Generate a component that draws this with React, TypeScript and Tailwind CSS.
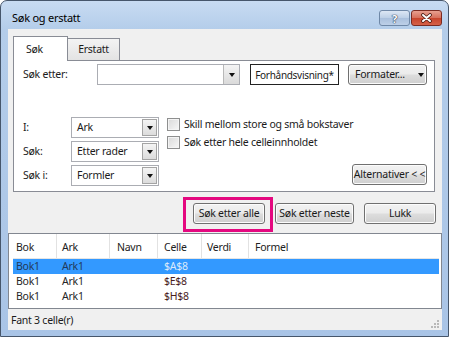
import type { ReactNode } from 'react'

const btn =
  'flex h-[21px] items-center justify-center whitespace-nowrap rounded-[3px] border border-[#707070] bg-[linear-gradient(#f2f2f2_0%,#ebebeb_48%,#dddddd_52%,#cfcfcf_100%)] text-[#1a1a1a] shadow-[inset_0_0_0_1px_#fcfcfc]'

function Arrow() {
  return <span className="h-0 w-0 border-x-[3.5px] border-t-[4px] border-x-transparent border-t-[#111]" />
}

function Combo({ value, w }: { value: string; w: string }) {
  return (
    <div className={`flex h-[21px] ${w} items-stretch border border-[#abadb3] bg-white`}>
      <span className="flex flex-1 items-center pl-[5px]">{value}</span>
      <span className="m-px flex w-[15px] items-center justify-center border border-[#a4a4a4] bg-[linear-gradient(#f4f4f4,#dcdcdc)]">
        <Arrow />
      </span>
    </div>
  )
}

function Check({ children }: { children: ReactNode }) {
  return (
    <div className="flex items-center gap-[4px]">
      <span className="h-[13px] w-[13px] border border-[#8e8f8f] bg-[linear-gradient(135deg,#d9d9d9,#f7f7f7)] shadow-[inset_0_0_0_1px_#f4f4f4]" />
      <span>{children}</span>
    </div>
  )
}

const cols = [
  { w: 'w-[44px]', pl: 'pl-[3px]', label: 'Bok' },
  { w: 'w-[53px]', pl: 'pl-[5px]', label: 'Ark' },
  { w: 'w-[48px]', pl: 'pl-[7px]', label: 'Navn' },
  { w: 'w-[44px]', pl: 'pl-[6px]', label: 'Celle' },
  { w: 'w-[47px]', pl: 'pl-[5px]', label: 'Verdi' },
]

const results = [
  { bok: 'Bok1', ark: 'Ark1', celle: '$A$8' },
  { bok: 'Bok1', ark: 'Ark1', celle: '$E$8' },
  { bok: 'Bok1', ark: 'Ark1', celle: '$H$8' },
]

export default function App() {
  return (
    <div className="h-[337px] w-[450px] bg-white font-['Noto_Sans',sans-serif] text-[10.5px] leading-none tracking-[-0.25px] text-[#1b1b1b]">
      <div className="flex h-full w-[449px] flex-col rounded-t-[7px] border border-[#46566b] bg-[linear-gradient(#c8dbf2,#b4cdea_28px,#a9c4e6_100%)]">
        {/* title bar */}
        <div className="flex h-[28px] shrink-0 items-start justify-between pl-[11px] pr-[6px]">
          <span className="mt-[11px] text-[11px] text-black">Søk og erstatt</span>
          <div className="mt-[9px] flex gap-[1px]">
            <div className="flex h-[16px] w-[31px] items-center justify-center rounded-[3px] border border-[#6f88a7] bg-[linear-gradient(#dce7f4,#bccfe6_50%,#a9bfdc_50%,#bdd0e8)]">
              <span className="text-[11px] font-bold text-white [text-shadow:0_0_1px_#2b3d57,0_0_1px_#2b3d57,0_0_1px_#2b3d57]">?</span>
            </div>
            <div className="flex h-[16px] w-[31px] items-center justify-center rounded-[3px] border border-[#7b2b22] bg-[linear-gradient(#e8a090,#d66e5a_50%,#c7432b_50%,#d56148)]">
              <svg width="13" height="10" viewBox="0 0 13 10">
                <path d="M3 2 L10 8 M10 2 L3 8" stroke="#4a1a12" strokeWidth="3.6" strokeLinecap="round" />
                <path d="M3 2 L10 8 M10 2 L3 8" stroke="#fff" strokeWidth="2" strokeLinecap="round" />
              </svg>
            </div>
          </div>
        </div>

        {/* client area */}
        <div className="mb-[6px] ml-[7px] mr-[6px] flex flex-1 flex-col bg-[#f0f0f0]">
          {/* tabs */}
          <div className="pl-[5px] pr-[7px] pt-[7px]">
            <div className="flex h-[24px] items-end">
              <div className="relative z-10 -mb-px flex h-[25px] w-[55px] items-center border border-b-0 border-[#898c95] bg-white pl-[12px] pt-[1px]">
                Søk
              </div>
              <div className="flex h-[22px] w-[52px] items-center justify-center border border-b-0 border-l-0 border-[#898c95] bg-[linear-gradient(#f3f3f3,#e3e3e3)]">
                Erstatt
              </div>
            </div>
            <div className="h-[132px] border border-[#898c95] bg-white pl-[9px] pr-[7px]">
              <div className="mt-[2px] flex h-[23px] items-center">
                <span className="w-[74px]">Søk etter:</span>
                <div className="flex h-[21px] w-[143px] items-stretch border border-[#abadb3] bg-white">
                  <span className="flex-1" />
                  <span className="flex w-[16px] items-center justify-center border-l border-[#b8b8b8] bg-[linear-gradient(#f4f4f4,#dadada)]">
                    <Arrow />
                  </span>
                </div>
                <div className="ml-[10px] flex h-[21px] w-[89px] items-center justify-center whitespace-nowrap border border-[#222] bg-white text-[10px] tracking-[-0.3px]">
                  Forhåndsvisning*
                </div>
                <div className={`${btn} ml-[9px] w-[79px] gap-[13px] pl-[4px]`}>
                  <span>Formater...</span>
                  <Arrow />
                </div>
              </div>

              <div className="mt-[31px] flex">
                <div className="flex flex-col gap-[3px]">
                  {[
                    ['I:', 'Ark'],
                    ['Søk:', 'Etter rader'],
                    ['Søk i:', 'Formler'],
                  ].map(([label, value]) => (
                    <div key={label} className="flex items-center">
                      <span className="w-[48px]">{label}</span>
                      <Combo value={value} w="w-[88px]" />
                    </div>
                  ))}
                </div>
                <div className="ml-[8px] flex flex-1 flex-col">
                  <div className="mt-[1px] flex flex-col gap-[5px]">
                    <Check>Skill mellom store og små bokstaver</Check>
                    <Check>Søk etter hele celleinnholdet</Check>
                  </div>
                  <div className={`${btn} mb-[1px] mt-auto w-[75px] self-end`}>Alternativer &lt; &lt;</div>
                </div>
              </div>
            </div>
          </div>

          {/* action buttons */}
          <div className="mb-[9px] mt-[11px] flex justify-end gap-[10px] pr-[6px]">
            <div className="relative">
              <div className={`${btn} w-[72px]`}>Søk etter alle</div>
              <span className="absolute -bottom-[8px] -left-[10px] -right-[8px] -top-[6px] border-[3px] border-[#e4087f]" />
            </div>
            <div className={`${btn} w-[79px] border-[#3c7fb1] shadow-[inset_0_0_0_1px_#bfe3f7]`}>Søk etter neste</div>
            <div className={`${btn} w-[72px]`}>Lukk</div>
          </div>

          {/* result list */}
          <div className="h-[76px] border border-[#828790] bg-white pl-[4px] pr-[2px]">
            <div className="flex h-[25px] border-b border-[#e5e5e5] text-[#222]">
              {cols.map((c) => (
                <div key={c.label} className={`${c.w} ${c.pl} flex items-center border-r border-[#e2e2e2] pt-[2px]`}>
                  {c.label}
                </div>
              ))}
              <div className="flex flex-1 items-center pl-[6px] pt-[2px]">Formel</div>
            </div>
            {results.map((r, i) => (
              <div
                key={r.celle}
                className={`flex h-[15px] items-center ${i === 0 ? 'bg-[#3399ff] text-[#22395a]' : 'text-[#262626]'}`}
              >
                <span className={`${cols[0].w} ${cols[0].pl}`}>{r.bok}</span>
                <span className={`${cols[1].w} ${cols[1].pl}`}>{r.ark}</span>
                <span className={`${cols[2].w}`} />
                <span className={`${cols[3].w} ${cols[3].pl} ${i === 0 ? 'text-[#dbe9fb]' : 'text-[#4a1d1d]'}`}>{r.celle}</span>
              </div>
            ))}
          </div>

          {/* status bar */}
          <div className="flex flex-1 items-center justify-between pl-[3px] pr-[2px] pt-[2px]">
            <span>Fant 3 celle(r)</span>
            <svg width="10" height="10" viewBox="0 0 10 10" className="mt-[6px]">
              {[
                [7, 1],
                [4, 4],
                [7, 4],
                [1, 7],
                [4, 7],
                [7, 7],
              ].map(([x, y]) => (
                <rect key={`${x}-${y}`} x={x} y={y} width="2" height="2" fill="#b8b8b8" />
              ))}
            </svg>
          </div>
        </div>
      </div>
    </div>
  )
}
